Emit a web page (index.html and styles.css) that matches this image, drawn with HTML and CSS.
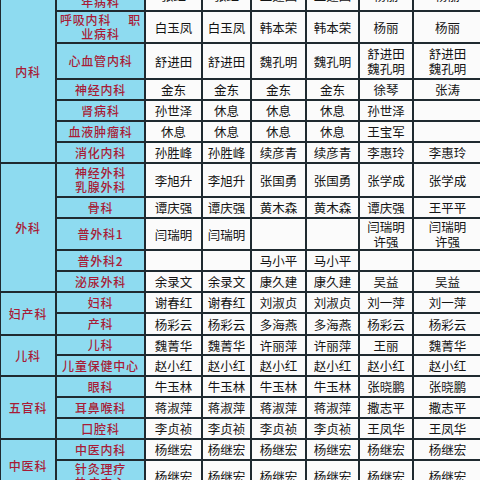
FILE: index.html
```html
<!DOCTYPE html>
<html lang="zh-CN">
<head>
<meta charset="utf-8">
<title>排班表</title>
<link rel="stylesheet" href="styles.css">
</head>
<body>
<table class="duty">
  <colgroup>
    <col class="c1"><col class="c2"><col class="c3"><col class="c4"><col class="c5"><col class="c6"><col class="c7"><col class="c8">
  </colgroup>
  <tbody>
    <tr class="h32">
      <td class="grp" rowspan="7">内科</td>
      <td class="dept"><div class="split"><span>内分泌科</span><span>老</span></div><div>年病科</div></td>
      <td>张红</td><td>张红</td><td>王建国</td><td>王建国</td><td>杨丽</td><td>杨丽</td>
    </tr>
    <tr class="h32">
      <td class="dept"><div class="split"><span>呼吸内科</span><span>职</span></div><div>业病科</div></td>
      <td>白玉凤</td><td>白玉凤</td><td>韩本荣</td><td>韩本荣</td><td>杨丽</td><td>杨丽</td>
    </tr>
    <tr class="h36">
      <td class="dept">心血管内科</td>
      <td>舒进田</td><td>舒进田</td><td>魏孔明</td><td>魏孔明</td><td>舒进田<br>魏孔明</td><td>舒进田<br>魏孔明</td>
    </tr>
    <tr class="h21">
      <td class="dept">神经内科</td>
      <td>金东</td><td>金东</td><td>金东</td><td>金东</td><td>徐琴</td><td>张涛</td>
    </tr>
    <tr class="h21">
      <td class="dept">肾病科</td>
      <td>孙世泽</td><td>休息</td><td>休息</td><td>休息</td><td>孙世泽</td><td></td>
    </tr>
    <tr class="h21">
      <td class="dept">血液肿瘤科</td>
      <td>休息</td><td>休息</td><td>休息</td><td>休息</td><td>王宝军</td><td></td>
    </tr>
    <tr class="h21">
      <td class="dept">消化内科</td>
      <td>孙胜峰</td><td>孙胜峰</td><td>续彦青</td><td>续彦青</td><td>李惠玲</td><td>李惠玲</td>
    </tr>
    <tr class="h34">
      <td class="grp" rowspan="5">外科</td>
      <td class="dept">神经外科<br>乳腺外科</td>
      <td>李旭升</td><td>李旭升</td><td>张国勇</td><td>张国勇</td><td>张学成</td><td>张学成</td>
    </tr>
    <tr class="h21">
      <td class="dept">骨科</td>
      <td>谭庆强</td><td>谭庆强</td><td>黄木森</td><td>黄木森</td><td>谭庆强</td><td>王平平</td>
    </tr>
    <tr class="h30">
      <td class="dept">普外科1</td>
      <td>闫瑞明</td><td>闫瑞明</td><td></td><td></td><td>闫瑞明<br>许强</td><td>闫瑞明<br>许强</td>
    </tr>
    <tr class="h21">
      <td class="dept">普外科2</td>
      <td></td><td></td><td>马小平</td><td>马小平</td><td></td><td></td>
    </tr>
    <tr class="h21">
      <td class="dept">泌尿外科</td>
      <td>余录文</td><td>余录文</td><td>康久建</td><td>康久建</td><td>吴益</td><td>吴益</td>
    </tr>
    <tr class="h21">
      <td class="grp" rowspan="2">妇产科</td>
      <td class="dept">妇科</td>
      <td>谢春红</td><td>谢春红</td><td>刘淑贞</td><td>刘淑贞</td><td>刘一萍</td><td>刘一萍</td>
    </tr>
    <tr class="h22">
      <td class="dept">产科</td>
      <td>杨彩云</td><td>杨彩云</td><td>多海燕</td><td>多海燕</td><td>杨彩云</td><td>杨彩云</td>
    </tr>
    <tr class="h20">
      <td class="grp" rowspan="2">儿科</td>
      <td class="dept">儿科</td>
      <td>魏菁华</td><td>魏菁华</td><td>许丽萍</td><td>许丽萍</td><td>王丽</td><td>魏菁华</td>
    </tr>
    <tr class="h21">
      <td class="dept">儿童保健中心</td>
      <td>赵小红</td><td>赵小红</td><td>赵小红</td><td>赵小红</td><td>赵小红</td><td>赵小红</td>
    </tr>
    <tr class="h21">
      <td class="grp" rowspan="3">五官科</td>
      <td class="dept">眼科</td>
      <td>牛玉林</td><td>牛玉林</td><td>牛玉林</td><td>牛玉林</td><td>张晓鹏</td><td>张晓鹏</td>
    </tr>
    <tr class="h21">
      <td class="dept">耳鼻喉科</td>
      <td>蒋淑萍</td><td>蒋淑萍</td><td>蒋淑萍</td><td>蒋淑萍</td><td>撒志平</td><td>撒志平</td>
    </tr>
    <tr class="h21">
      <td class="dept">口腔科</td>
      <td>李贞祯</td><td>李贞祯</td><td>李贞祯</td><td>李贞祯</td><td>王凤华</td><td>王凤华</td>
    </tr>
    <tr class="h21">
      <td class="grp" rowspan="2">中医科</td>
      <td class="dept">中医内科</td>
      <td>杨继宏</td><td>杨继宏</td><td>杨继宏</td><td>杨继宏</td><td>杨继宏</td><td>杨继宏</td>
    </tr>
    <tr class="h32">
      <td class="dept">针灸理疗<br>热疗中心</td>
      <td>杨继宏</td><td>杨继宏</td><td>杨继宏</td><td>杨继宏</td><td>杨继宏</td><td>杨继宏</td>
    </tr>
  </tbody>
</table>
</body>
</html>
```

FILE: styles.css
```css
html, body {
  margin: 0;
  padding: 0;
  overflow: hidden;
  background: #ffffff;
}

.duty {
  border-collapse: collapse;
  table-layout: fixed;
  width: 482px;
  margin-top: -22px;
  margin-left: -1px;
  font-family: "Noto Sans CJK SC", "Noto Sans", sans-serif;
  font-size: 12.5px;
  line-height: 15px;
  color: #141414;
}

.c1 { width: 56px; }
.c2 { width: 89px; }
.c3 { width: 57px; }
.c4 { width: 49px; }
.c5 { width: 55px; }
.c6 { width: 53px; }
.c7 { width: 54px; }
.c8 { width: 69px; }

.duty td {
  border: 2px solid #1f2a30;
  padding: 0 3px;
  text-align: center;
  vertical-align: middle;
  background: #fbfbfb;
  white-space: nowrap;
  overflow: hidden;
}

.duty td.grp,
.duty td.dept {
  background: #8edbf0;
  color: #a81b36;
  font-weight: 500;
  font-size: 12px;
  letter-spacing: 0.8px;
}

.duty td.dept {
  line-height: 14px;
}

.split {
  display: flex;
  justify-content: space-between;
}

.h20 { height: 20px; }
.h21 { height: 21px; }
.h22 { height: 22px; }
.h30 { height: 30px; }
.h32 { height: 32px; }
.h34 { height: 34px; }
.h36 { height: 36px; }
```
